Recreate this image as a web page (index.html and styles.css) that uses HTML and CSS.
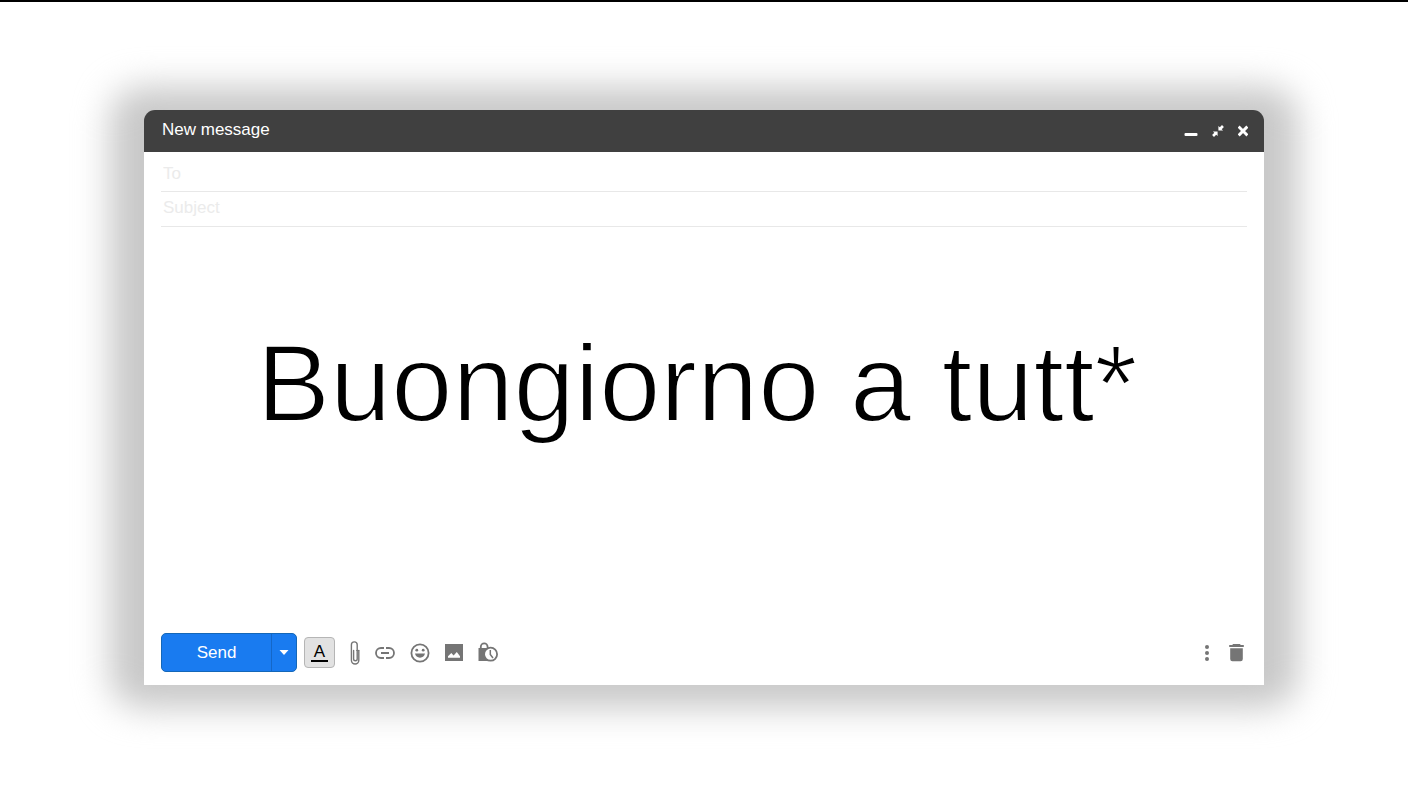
FILE: index.html
```html
<!DOCTYPE html>
<html lang="it">
<head>
  <meta charset="UTF-8">
  <meta name="viewport" content="width=device-width, initial-scale=1">
  <title>New message</title>
  <link rel="stylesheet" href="styles.css">
</head>
<body>

  <form class="compose">
    <header class="titlebar">
      <h1>New message</h1>
      <div class="window-buttons">
        <button type="button" aria-label="Minimize">
          <svg width="14" height="14" viewBox="0 0 14 14"><rect x="0.5" y="9" width="13" height="3" rx="1" fill="#fff"/></svg>
        </button>
        <button type="button" aria-label="Exit full screen">
          <svg width="12" height="12" viewBox="0 0 12 12">
            <path d="M6.4 0.9V5.6H11.1L9.7 4.2L11.9 2L10 0.1L7.8 2.3Z M5.6 11.1V6.4H0.9L2.3 7.8L0.1 10L2 11.9L4.2 9.7Z" fill="#fff"/>
          </svg>
        </button>
        <button type="button" aria-label="Close">
          <svg width="10" height="12" viewBox="0 0 10 12"><path d="M1.7 2.7L8.3 9.3M8.3 2.7L1.7 9.3" stroke="#fff" stroke-width="3" stroke-linecap="square"/></svg>
        </button>
      </div>
    </header>

    <div class="fields">
      <input class="field" type="text" placeholder="To" aria-label="To">
      <input class="field subject" type="text" placeholder="Subject" aria-label="Subject">
    </div>

    <div class="message">
      <textarea class="message-text" rows="1" aria-label="Message" spellcheck="false">Buongiorno a tutt*</textarea>
    </div>

    <footer class="toolbar">
      <div class="send-group">
        <button class="send" type="button">Send</button>
        <button class="send-more" type="button" aria-label="More send options">
          <svg width="10" height="5" viewBox="0 0 10 5"><path d="M0.5 0H9.5L5 5Z" fill="#fff"/></svg>
        </button>
      </div>

      <button class="format" type="button" aria-label="Formatting options"><span>A</span></button>

      <div class="tools">
        <button type="button" aria-label="Attach files">
          <svg width="10" height="24" viewBox="0 0 10 24" fill="none" stroke="#757575" stroke-width="1.4" stroke-linecap="round">
            <path d="M7.2 7V3.8a2.9 2.9 0 0 0-5.8 0V19.3a3.7 3.7 0 0 0 7.4 0V9.5M7.2 7V18a1.8 1.8 0 0 1-3.6 0V9.5"/>
            <path d="M6.6 9.5H8.8" stroke-width="1"/>
          </svg>
        </button>
        <button type="button" aria-label="Insert link">
          <svg width="20" height="12" viewBox="0 0 20 12" fill="none" stroke="#757575" stroke-width="1.8">
            <path d="M9 1H6a5 5 0 0 0 0 10H9M11 1H14a5 5 0 0 1 0 10H11M6 6H14"/>
          </svg>
        </button>
        <button type="button" aria-label="Insert emoji">
          <svg width="20" height="20" viewBox="0 0 20 20" fill="#757575">
            <circle cx="10" cy="10" r="8.6" fill="none" stroke="#757575" stroke-width="1.8"/>
            <circle cx="6.8" cy="7.2" r="1.4"/>
            <circle cx="13.2" cy="7.2" r="1.4"/>
            <path d="M5 10.6H15A5.1 5.1 0 0 1 5 10.6Z"/>
          </svg>
        </button>
        <button type="button" aria-label="Insert photo">
          <svg width="18" height="18" viewBox="0 0 18 18">
            <rect width="18" height="17" fill="#757575"/>
            <path d="M3 13.8V12.3L6.3 9L8.6 11.6L11.8 8L15 12.3V13.8Z" fill="#fff"/>
          </svg>
        </button>
        <button type="button" aria-label="Confidential mode">
          <svg width="20" height="22" viewBox="0 0 20 22">
            <path d="M2.8 7V4.8a3.4 3.4 0 0 1 6.8 0V7" fill="none" stroke="#757575" stroke-width="1.8"/>
            <path d="M0.5 6H12V19H0.5Z" fill="#757575"/>
            <circle cx="12.6" cy="12.2" r="6.5" fill="#fff" stroke="#757575" stroke-width="1.8"/>
            <path d="M12.3 8V12.4L15 16" fill="none" stroke="#757575" stroke-width="1.5"/>
          </svg>
        </button>
      </div>

      <div class="tools-end">
        <button type="button" aria-label="More options">
          <svg width="4" height="16" viewBox="0 0 4 16" fill="#757575">
            <circle cx="2" cy="2" r="2"/><circle cx="2" cy="8" r="2"/><circle cx="2" cy="14" r="2"/>
          </svg>
        </button>
        <button type="button" aria-label="Discard draft">
          <svg width="15" height="18" viewBox="0 0 15 18" fill="#757575">
            <path d="M0.2 1H3.3L4 0H11L11.7 1H14.8V3H0.2Z"/>
            <path d="M1.2 4.2H13.8V15A2.2 2.2 0 0 1 11.6 17.2H3.4A2.2 2.2 0 0 1 1.2 15Z"/>
          </svg>
        </button>
      </div>
    </footer>
  </form>

</body>
</html>
```
FILE: styles.css
```css
* {
  box-sizing: border-box;
}

body {
  display: flex;
  min-height: 100vh;
  margin: 0;
  padding: 108px 144px 107px;
  border-top: 2px solid #000;
  background: #fff;
  font-family: "Liberation Sans", Arial, sans-serif;
  font-size: 17px;
}

button {
  display: flex;
  align-items: center;
  justify-content: center;
  margin: 0;
  padding: 0;
  border: none;
  background: none;
  font: inherit;
  cursor: pointer;
}

svg {
  display: block;
}

.compose {
  position: relative;
  z-index: 0;
  display: flex;
  flex: 1;
  flex-direction: column;
  min-width: 0;
}

/* soft halo, wider on the sides than above and below */
.compose::before {
  content: "";
  position: absolute;
  inset: -23px -34px;
  z-index: -1;
  background: #c8c8c8;
  border-radius: 32px;
  filter: blur(17px);
}

.titlebar {
  display: flex;
  align-items: center;
  justify-content: space-between;
  height: 42px;
  padding: 0 16px 0 18px;
  background: #404040;
  border-radius: 11px 11px 0 0;
  color: #fff;
}

.titlebar h1 {
  margin: 0 0 3px;
  font-size: 17px;
  font-weight: normal;
}

.window-buttons {
  display: flex;
  align-items: center;
  gap: 14px;
}

.fields {
  padding: 4px 17px 0;
  background: #fff;
}

.field {
  display: block;
  width: 100%;
  height: 36px;
  padding: 0 2px;
  border: none;
  border-bottom: 1px solid #e8e8e8;
  background: none;
  font: inherit;
  outline: none;
}

.subject {
  height: 35px;
  padding-bottom: 2px;
}

.field::placeholder {
  color: #ebebeb;
}

.message {
  flex: 1;
  padding: 90px 31px 90px 17px;
  background: #fff;
}

.message-text {
  display: block;
  width: 100%;
  height: 140px;
  padding: 0;
  border: none;
  background: none;
  color: #000;
  font-family: "Liberation Sans", Arial, sans-serif;
  font-size: 110px;
  line-height: 132px;
  text-align: center;
  -webkit-text-stroke: 2px #fff;
  resize: none;
  overflow: hidden;
  outline: none;
}

.toolbar {
  display: flex;
  align-items: center;
  padding: 0 20px 13px 17px;
  background: #fff;
}

.send-group {
  display: flex;
  height: 39px;
  border: 1px solid #1467b8;
  border-radius: 5px;
  background: #197bf0;
}

.send {
  width: 109px;
  color: #fff;
}

.send-more {
  width: 25px;
  border-left: 1px solid #1467c8;
}

.format {
  width: 31px;
  height: 31px;
  margin-left: 7px;
  border: 1px solid #b5b5b5;
  border-radius: 4px;
  background: #e2e2e2;
}

.format span {
  width: 17px;
  border-bottom: 2px solid #000;
  line-height: 16px;
}

.tools {
  display: flex;
  align-items: center;
  gap: 15px;
  margin-left: 15px;
}

.tools-end {
  display: flex;
  align-items: center;
  gap: 20px;
  margin-left: auto;
}
```
